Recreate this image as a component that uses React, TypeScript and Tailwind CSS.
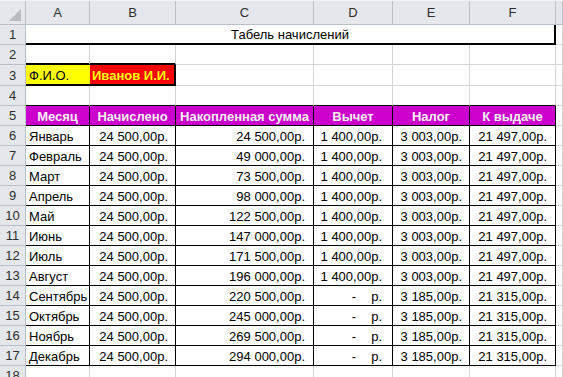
const months = [
  ['Январь', '24 500,00р.', '1 400,00р.', '3 003,00р.', '21 497,00р.'],
  ['Февраль', '49 000,00р.', '1 400,00р.', '3 003,00р.', '21 497,00р.'],
  ['Март', '73 500,00р.', '1 400,00р.', '3 003,00р.', '21 497,00р.'],
  ['Апрель', '98 000,00р.', '1 400,00р.', '3 003,00р.', '21 497,00р.'],
  ['Май', '122 500,00р.', '1 400,00р.', '3 003,00р.', '21 497,00р.'],
  ['Июнь', '147 000,00р.', '1 400,00р.', '3 003,00р.', '21 497,00р.'],
  ['Июль', '171 500,00р.', '1 400,00р.', '3 003,00р.', '21 497,00р.'],
  ['Август', '196 000,00р.', '1 400,00р.', '3 003,00р.', '21 497,00р.'],
  ['Сентябрь', '220 500,00р.', '-', '3 185,00р.', '21 315,00р.'],
  ['Октябрь', '245 000,00р.', '-', '3 185,00р.', '21 315,00р.'],
  ['Ноябрь', '269 500,00р.', '-', '3 185,00р.', '21 315,00р.'],
  ['Декабрь', '294 000,00р.', '-', '3 185,00р.', '21 315,00р.'],
]

const grid = 'border-r border-b border-[#d4d4d4]'
const hdr = 'bg-[#e4e7eb] border-r border-b border-[#b9bfc7] text-[#2e2e2e] flex items-center justify-center shrink-0'

function RowHead({ n }: { n: number }) {
  return <div className={`${hdr} w-[26px] h-full`}>{n}</div>
}

function Empty({ n, h = 'h-[20px]' }: { n: number; h?: string }) {
  return (
    <div className={`flex ${h}`}>
      <RowHead n={n} />
      <div className={`${grid} w-[64px] shrink-0`} />
      <div className={`${grid} w-[86px] shrink-0`} />
      <div className={`${grid} w-[138px] shrink-0`} />
      <div className={`${grid} w-[79px] shrink-0`} />
      <div className={`${grid} w-[77px] shrink-0`} />
      <div className={`${grid} w-[86px] shrink-0`} />
      <div className={`${grid} flex-1`} />
    </div>
  )
}

export default function App() {
  return (
    <div className="w-[563px] h-[377px] overflow-hidden bg-white text-[13px] text-black font-['Liberation_Sans',Arial,sans-serif] leading-none">
      {/* шапка колонок */}
      <div className="flex h-[25px] border-t border-[#f4f5f7]">
        <div className={`${hdr} w-[26px] relative`}>
          <svg width="26" height="24" className="absolute inset-0">
            <polygon points="21,8 21,20 9,20" fill="#b8bcc2" />
          </svg>
        </div>
        {['A', 'B', 'C', 'D', 'E', 'F'].map((c, i) => (
          <div
            key={c}
            className={`${hdr} ${['w-[64px]', 'w-[86px]', 'w-[138px]', 'w-[79px]', 'w-[77px]', 'w-[86px]'][i]}`}
          >
            {c}
          </div>
        ))}
        <div className={`${hdr} flex-1`} />
      </div>

      {/* 1 */}
      <div className="flex h-[20px]">
        <RowHead n={1} />
        <div className="w-[530px] shrink-0 border-b-2 border-r-2 border-black flex items-end justify-center pb-[2px]">
          Табель начислений
        </div>
        <div className={`${grid} flex-1`} />
      </div>

      {/* 2 */}
      <div className="flex h-[20px]">
        <RowHead n={2} />
        <div className="w-[64px] shrink-0 border-r border-[#d4d4d4] border-b-2 border-b-black" />
        <div className="w-[86px] shrink-0 border-r border-[#d4d4d4] border-b-2 border-b-black" />
        <div className={`${grid} w-[138px] shrink-0`} />
        <div className={`${grid} w-[79px] shrink-0`} />
        <div className={`${grid} w-[77px] shrink-0`} />
        <div className={`${grid} w-[86px] shrink-0`} />
        <div className={`${grid} flex-1`} />
      </div>

      {/* 3 */}
      <div className="flex h-[21px]">
        <RowHead n={3} />
        <div className="w-[64px] shrink-0 bg-[#ffff00] border-b-2 border-black flex items-end pl-[3px] pb-[2px]">
          Ф.И.О.
        </div>
        <div className="w-[86px] shrink-0 bg-[#ff0000] border-b-2 border-r-2 border-black flex items-end pl-[2px] pb-[2px] font-bold text-[#ffff00]">
          Иванов И.И.
        </div>
        <div className={`${grid} w-[138px] shrink-0`} />
        <div className={`${grid} w-[79px] shrink-0`} />
        <div className={`${grid} w-[77px] shrink-0`} />
        <div className={`${grid} w-[86px] shrink-0`} />
        <div className={`${grid} flex-1`} />
      </div>

      {/* 4 */}
      <div className="flex h-[20px]">
        <RowHead n={4} />
        <div className="w-[64px] shrink-0 border-r border-r-[#d4d4d4] border-b border-black" />
        <div className="w-[86px] shrink-0 border-r border-r-[#d4d4d4] border-b border-black" />
        <div className="w-[138px] shrink-0 border-r border-r-[#d4d4d4] border-b border-black" />
        <div className="w-[79px] shrink-0 border-r border-r-[#d4d4d4] border-b border-black" />
        <div className="w-[77px] shrink-0 border-r border-r-[#d4d4d4] border-b border-black" />
        <div className="w-[86px] shrink-0 border-r border-r-[#d4d4d4] border-b border-black" />
        <div className={`${grid} flex-1`} />
      </div>

      {/* 5 — заголовок таблицы */}
      <div className="flex h-[20px]">
        <RowHead n={5} />
        {['Месяц', 'Начислено', 'Накопленная сумма', 'Вычет', 'Налог', 'К выдаче'].map((t, i) => (
          <div
            key={t}
            className={`${['w-[64px]', 'w-[86px]', 'w-[138px]', 'w-[79px]', 'w-[77px]', 'w-[86px]'][i]} shrink-0 bg-[#cc00cc] border-r border-b border-black text-[#f2f2f2] font-bold flex items-end justify-center pb-[2px] whitespace-nowrap`}
          >
            {t}
          </div>
        ))}
        <div className={`${grid} flex-1`} />
      </div>

      {months.map(([m, acc, ded, tax, pay], i) => (
        <div key={m} className="flex h-[20px]">
          <RowHead n={i + 6} />
          <div className="w-[64px] shrink-0 border-r border-b border-black flex items-end pl-[3px] pb-[2px] whitespace-nowrap">
            {m}
          </div>
          <div className="w-[86px] shrink-0 border-r border-b border-black flex items-end justify-end pr-[7px] pb-[2px] whitespace-nowrap">
            24 500,00р.
          </div>
          <div className="w-[138px] shrink-0 border-r border-b border-black flex items-end justify-end pr-[8px] pb-[2px] whitespace-nowrap">
            {acc}
          </div>
          <div className="w-[79px] shrink-0 border-r border-b border-black flex items-end justify-end pr-[10px] pb-[2px] whitespace-nowrap">
            {ded === '-' ? (
              <>
                <span>-</span>
                <span className="ml-[15px]">р.</span>
              </>
            ) : (
              ded
            )}
          </div>
          <div className="w-[77px] shrink-0 border-r border-b border-black flex items-end justify-end pr-[7px] pb-[2px] whitespace-nowrap">
            {tax}
          </div>
          <div className="w-[86px] shrink-0 border-r border-b border-black flex items-end justify-end pr-[8px] pb-[2px] whitespace-nowrap">
            {pay}
          </div>
          <div className={`${grid} flex-1`} />
        </div>
      ))}

      <Empty n={18} />
    </div>
  )
}
